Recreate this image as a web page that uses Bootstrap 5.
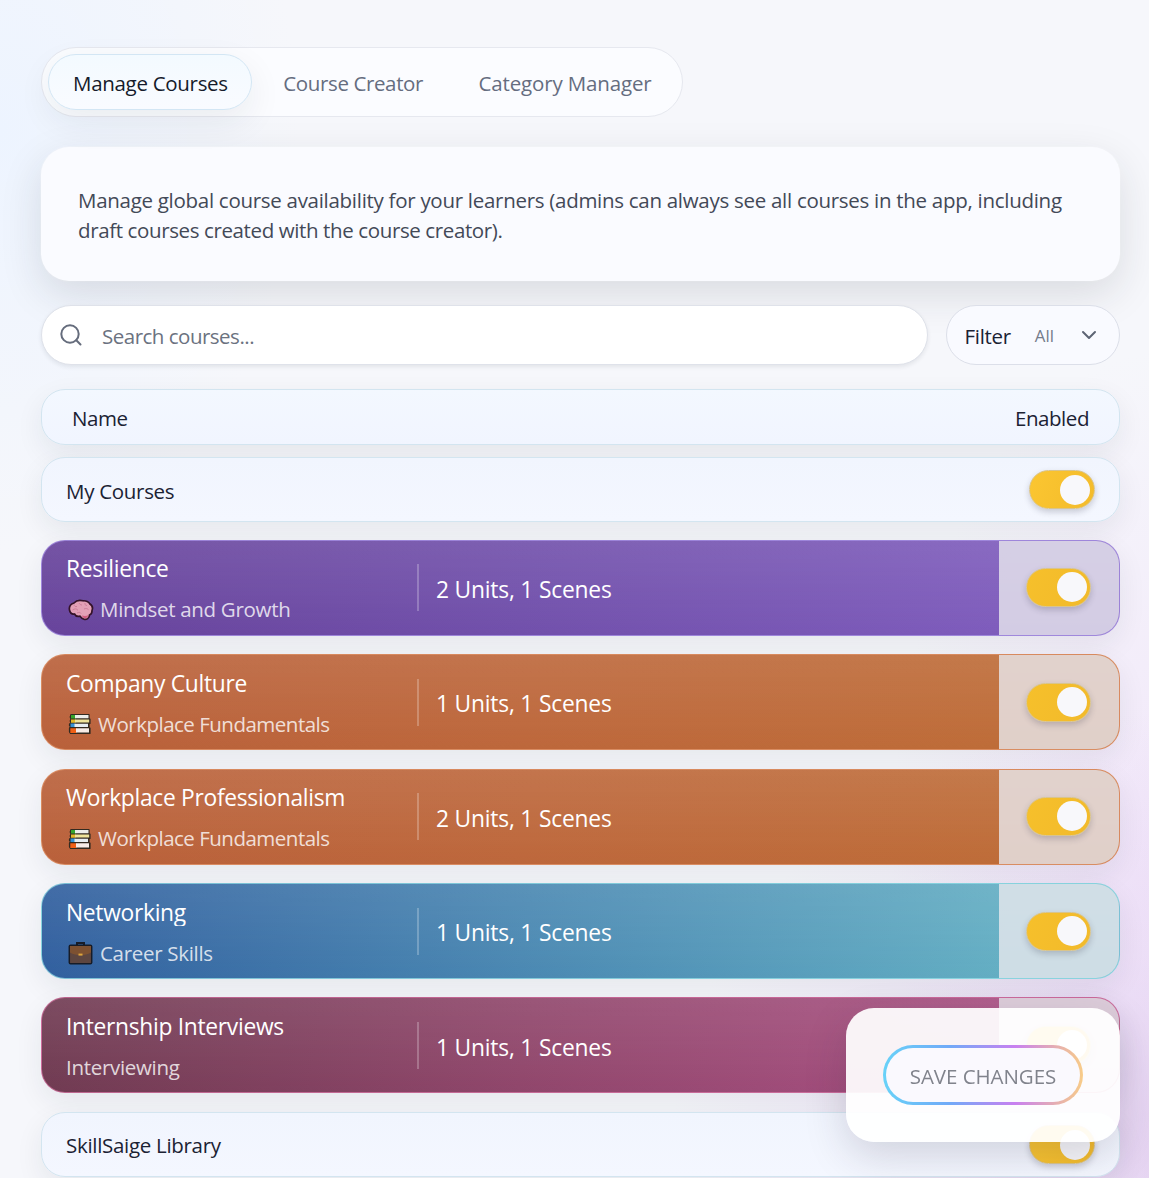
<!DOCTYPE html>
<html lang="en">
<head>
<meta charset="utf-8">
<meta name="viewport" content="width=device-width, initial-scale=1">
<title>Manage Courses</title>
<link href="https://cdn.jsdelivr.net/npm/bootstrap@5.3.0/dist/css/bootstrap.min.css" rel="stylesheet">
<style>
html,body{height:100%}
body{
  font-family:"Open Sans","Noto Sans",sans-serif;font-size:20.5px;color:#1b2233;letter-spacing:-.3px;overflow:hidden;
  background:
    radial-gradient(ellipse 520px 440px at 1190px 1150px,rgba(214,182,232,.55),rgba(222,194,240,.3) 45%,rgba(230,205,245,0) 100%),
    radial-gradient(ellipse 280px 500px at 1170px 850px,rgba(238,220,248,.6),rgba(240,226,250,0) 100%),
    radial-gradient(ellipse 300px 420px at 0 130px,#edf4ff 0,rgba(237,244,255,0) 100%),
    #f6f7fb;
}
.page-wrap{padding:47px 29px 0 41px}
.sp-0{letter-spacing:-.1px}.sp-1{letter-spacing:-.15px}.sp-4{letter-spacing:-.5px}.sp-3{letter-spacing:-.38px}
.tab-shell{width:642px;height:70px;padding:6px;border:1px solid #e6e8ef;border-radius:35px;background:rgba(252,253,255,.85)}
.tab-shell .nav-link{height:56px;border-radius:28px;border:1px solid transparent;color:#656d7f;padding:2px 24.5px 0 25.5px;line-height:53px;white-space:nowrap;margin-right:5px}
.tab-shell .nav-link + .nav-link + .nav-link{padding-left:24px}
.tab-shell .nav-link.active{color:#151b2b;background:linear-gradient(#f3faff,#f9fbff);border-color:#d3e6f4;box-shadow:0 12px 34px rgba(30,40,60,.075);padding-left:24px;padding-right:23px}
.intro-panel{margin-top:30px;height:134px;padding:38px 30px 0 37px;border-radius:28px;background:#fafbff;color:#434957;line-height:30px;letter-spacing:-.285px;box-shadow:0 14px 42px rgba(30,35,45,.13),0 0 0 1px rgba(255,255,255,.25)}
.tool-row{margin-top:24px;gap:18px}
.search-pill{height:60px;border-radius:30px;background:#fff;border:1px solid #dfe2ea;padding:2px 20px 0 18px;color:#6b7280;box-shadow:0 2px 4px rgba(30,40,60,.09)}
.search-pill svg{margin:-2px 20px 0 0}
.filter-pill{width:174px;height:60px;border-radius:30px;background:#f9faff;border:1px solid #dcdfe9;padding:2px 21px 0 17.5px}
.filter-value{font-size:16.8px;color:#747b8a;margin-left:24px;letter-spacing:0}
.filter-pill svg{margin-top:-2px}
.pale-row{border:1px solid #d3e5f0;border-radius:24px;background:linear-gradient(#f1f5fe,#f4f7ff);box-shadow:0 10px 28px rgba(30,35,55,.075)}
.head-row{margin-top:24px;height:56px;padding:3px 30px 0 30px;background:linear-gradient(#f3f8ff,#f1f5ff);letter-spacing:-.45px}
.group-row{height:65px;padding:0 24px}
.group-row .group-name{padding-top:3px}
.course-list{margin-top:12.3px}
.own-courses{margin-bottom:17.6px}
.course-row{height:96px;border-radius:24px;overflow:hidden;color:#fff;border:1px solid var(--edge);background:linear-gradient(rgba(255,255,255,.09),rgba(255,255,255,0)),linear-gradient(100deg,var(--from),var(--mid) 45%,var(--to) 89%);background-origin:padding-box}
.shade-wrap{border-radius:24px;box-shadow:0 10px 28px rgba(30,35,55,.075);height:96px;margin-bottom:18.4px}
.course-main{width:375px;padding:14.5px 0 0 24px;flex:none}
.course-title{font-size:22.8px;line-height:27px;height:27px;white-space:nowrap;letter-spacing:-.3px}
.title-cut{overflow:hidden}
.course-cat{margin-top:13px;line-height:28px;height:28px;color:rgba(255,255,255,.8);white-space:nowrap}
.course-cat svg{width:26px;height:24px;margin:1px 6px 0 2px;flex:none}
.tone-clay .course-cat svg{margin-right:4px}
.course-count{border-left:2px solid rgba(255,255,255,.24);height:47px;line-height:47px;padding:1.600px 0 0 17px;font-size:22.8px;letter-spacing:-.2px}
.course-switch{width:120px;background:rgba(233,233,238,.8);padding-left:27px}
.tone-violet{--from:#67439b;--mid:#7150ab;--to:#7e5cbc;--edge:rgba(163,141,224,.85)}
.tone-clay{--from:#b9603a;--mid:#bd673b;--to:#be6c38;--edge:rgba(222,146,104,.8)}
.tone-ocean{--from:#305e9e;--mid:#4a88b2;--to:#63aec3;--edge:rgba(146,222,230,.75)}
.tone-plum{--from:#6f3a51;--mid:#90466b;--to:#aa5083;--edge:rgba(216,116,164,.7)}
.toggle-on{width:66px;height:39px;border-radius:20px;background:linear-gradient(110deg,#fbc631,#f3bb2b);border:1px solid #d9c48c;padding:4px;box-shadow:0 3px 6px rgba(40,40,60,.22);flex:none}
.toggle-on span{width:30px;height:30px;border-radius:50%;background:#f8f8fb}
.course-switch .toggle-on{width:65px;padding:3px;background:linear-gradient(110deg,#f6c02b,#f2ba2b)}
.save-panel{right:29px;bottom:36px;width:274px;height:134px;border-radius:28px;background:rgba(255,255,255,.93);box-shadow:0 14px 42px rgba(40,35,60,.17);z-index:10}
.save-btn{width:200px;height:60px;border-radius:30px;border:3px solid transparent;font-size:20.5px;color:#80838c;background:linear-gradient(#faf9fe,#faf9fe) padding-box,linear-gradient(90deg,#68d2f8,#70aaf8 33%,#c880f0 66%,#f8cc88) border-box;padding:2px 0 0;letter-spacing:-.05px}
</style>
</head>
<body>
<svg class="d-none">
  <symbol id="ic-brain" viewBox="0 0 26 24">
    <path d="M1.500 12C.8 8.500 3 6 6 5c2-2.300 6-3 9-2.200 3-.3 6 1.200 6.700 3C24 7.200 25 10 24 12.500c.2 2.600-1.300 4-2.500 4.500 0 3.200-3 5-5.500 4.200-2-.5-3-1.600-4-3C9.500 18.800 7.500 18 6.500 16 4 16.300 2 15 1.500 12Z" fill="#e3a0b6" stroke="#351329" stroke-width="1.700"/>
    <path d="M14 17.500c2 .8 4.500.6 6.500-.4-.4 2.400-2.600 3.600-4.300 3.100-1-.3-1.800-1.200-2.200-2.700Z" fill="#cf5d80"/>
    <path d="M6 6.500c0 1.500 1.500 2.500 3 2M11 5c1 1 1 2 3 2M17 5c-.5 1.500.5 2.500 2 2.500M4.500 12c2-1.500 4-1.500 5.500.3M16 11c2-1 3.500-.3 4.500.7M9 15c2-.8 3-1 4 .5" fill="none" stroke="#c97996" stroke-width=".9"/>
  </symbol>
  <symbol id="ic-books" viewBox="0 0 26 24">
    <path d="M3 2.500h18V7h1v4.500h-1V16h1v5.500H2.500L1.500 20v-4l1-1-1-1.500V12L3 11l-.8-2L3 7l-.8-2Z" fill="#332a20" stroke="#332a20" stroke-width="1.200" stroke-linejoin="round"/>
    <path d="M3 3h5v3.600H3z" fill="#36a52c"/><path d="M7 3h13.500v3.300H7z" fill="#eceeea"/>
    <path d="M3 7.400h4.500v3.300H3z" fill="#e2b826"/><path d="M7 7.500h14.200v3.100H7z" fill="#efe49a"/>
    <path d="M2.500 11.600h5V15h-5z" fill="#3391d6"/><path d="M6.500 11.700H20v3.400H6.500z" fill="#e7eef2"/>
    <path d="M2.300 16.200h6.200V21H2.300z" fill="#f06016"/><path d="M8 16.300h13v4.300H8z" fill="#f7ece7"/>
  </symbol>
  <symbol id="ic-case" viewBox="0 0 26 24">
    <path d="M9 4.500V2h7v2.500" fill="none" stroke="#171c27" stroke-width="2"/>
    <rect x="1.300" y="4.200" width="22.400" height="18.500" rx="1.300" fill="#5d4640" stroke="#171c27" stroke-width="1.500"/>
    <path d="M2 5h21v6.500c-3 2-7 2.500-10.500 2.500S5 13.500 2 11.500Z" fill="#7d5131"/>
    <rect x="10.500" y="12.600" width="4" height="2" fill="#dca53d"/>
  </symbol>
</svg>

<main class="page-wrap">
  <nav class="tab-shell nav flex-nowrap">
    <a class="nav-link active" href="#">Manage Courses</a>
    <a class="nav-link sp-3" href="#">Course Creator</a>
    <a class="nav-link sp-1" href="#">Category Manager</a>
  </nav>

  <section class="intro-panel">Manage global course availability for your learners (admins can always see all courses in the app, including<br><span class="sp-3">draft courses created with the course creator).</span></section>

  <div class="tool-row d-flex">
    <div class="search-pill d-flex align-items-center flex-grow-1 sp-4">
      <svg width="22" height="22" viewBox="0 0 22 22" fill="none" stroke="#656c7c" stroke-width="2" stroke-linecap="round"><circle cx="10" cy="10" r="8.700"/><path d="m16.300 16.300 4.200 4.200"/></svg>
      <span>Search courses...</span>
    </div>
    <div class="filter-pill d-flex align-items-center">
      <span>Filter</span><span class="filter-value">All</span>
      <svg class="ms-auto" width="18" height="12" viewBox="0 0 18 12" fill="none" stroke="#5d6474" stroke-width="2" stroke-linecap="round" stroke-linejoin="round"><path d="m3 3 6 6 6-6"/></svg>
    </div>
  </div>

  <div class="pale-row head-row d-flex align-items-center justify-content-between"><span>Name</span><span>Enabled</span></div>

  <div class="course-list">
    <div class="pale-row group-row own-courses d-flex align-items-center justify-content-between">
      <span class="group-name">My Courses</span>
      <div class="toggle-on d-flex justify-content-end"><span></span></div>
    </div>

    <div class="shade-wrap"><div class="course-row tone-violet d-flex align-items-stretch">
      <div class="course-main"><div class="course-title">Resilience</div><div class="course-cat d-flex align-items-center"><svg><use href="#ic-brain"/></svg>Mindset and Growth</div></div>
      <div class="course-count align-self-center">2 Units, 1 Scenes</div>
      <div class="course-switch ms-auto d-flex align-items-center"><div class="toggle-on d-flex justify-content-end"><span></span></div></div>
    </div></div>

    <div class="shade-wrap"><div class="course-row tone-clay d-flex align-items-stretch">
      <div class="course-main"><div class="course-title sp-0">Company Culture</div><div class="course-cat sp-4 d-flex align-items-center"><svg><use href="#ic-books"/></svg>Workplace Fundamentals</div></div>
      <div class="course-count align-self-center">1 Units, 1 Scenes</div>
      <div class="course-switch ms-auto d-flex align-items-center"><div class="toggle-on d-flex justify-content-end"><span></span></div></div>
    </div></div>

    <div class="shade-wrap"><div class="course-row tone-clay d-flex align-items-stretch">
      <div class="course-main"><div class="course-title">Workplace Professionalism</div><div class="course-cat sp-4 d-flex align-items-center"><svg><use href="#ic-books"/></svg>Workplace Fundamentals</div></div>
      <div class="course-count align-self-center">2 Units, 1 Scenes</div>
      <div class="course-switch ms-auto d-flex align-items-center"><div class="toggle-on d-flex justify-content-end"><span></span></div></div>
    </div></div>

    <div class="shade-wrap"><div class="course-row tone-ocean d-flex align-items-stretch">
      <div class="course-main"><div class="course-title title-cut sp-0">Networking</div><div class="course-cat d-flex align-items-center"><svg><use href="#ic-case"/></svg>Career Skills</div></div>
      <div class="course-count align-self-center">1 Units, 1 Scenes</div>
      <div class="course-switch ms-auto d-flex align-items-center"><div class="toggle-on d-flex justify-content-end"><span></span></div></div>
    </div></div>

    <div class="shade-wrap"><div class="course-row tone-plum d-flex align-items-stretch">
      <div class="course-main"><div class="course-title sp-3">Internship Interviews</div><div class="course-cat d-flex align-items-center">Interviewing</div></div>
      <div class="course-count align-self-center">1 Units, 1 Scenes</div>
      <div class="course-switch ms-auto d-flex align-items-center"><div class="toggle-on d-flex justify-content-end"><span></span></div></div>
    </div></div>

    <div class="pale-row group-row d-flex align-items-center justify-content-between">
      <span class="group-name">SkillSaige Library</span>
      <div class="toggle-on d-flex justify-content-end"><span></span></div>
    </div>
  </div>
</main>

<div class="save-panel position-fixed d-flex align-items-center justify-content-center">
  <button class="save-btn" type="button">SAVE CHANGES</button>
</div>
<script src="https://cdn.jsdelivr.net/npm/bootstrap@5.3.0/dist/js/bootstrap.bundle.min.js"></script>
</body>
</html>
